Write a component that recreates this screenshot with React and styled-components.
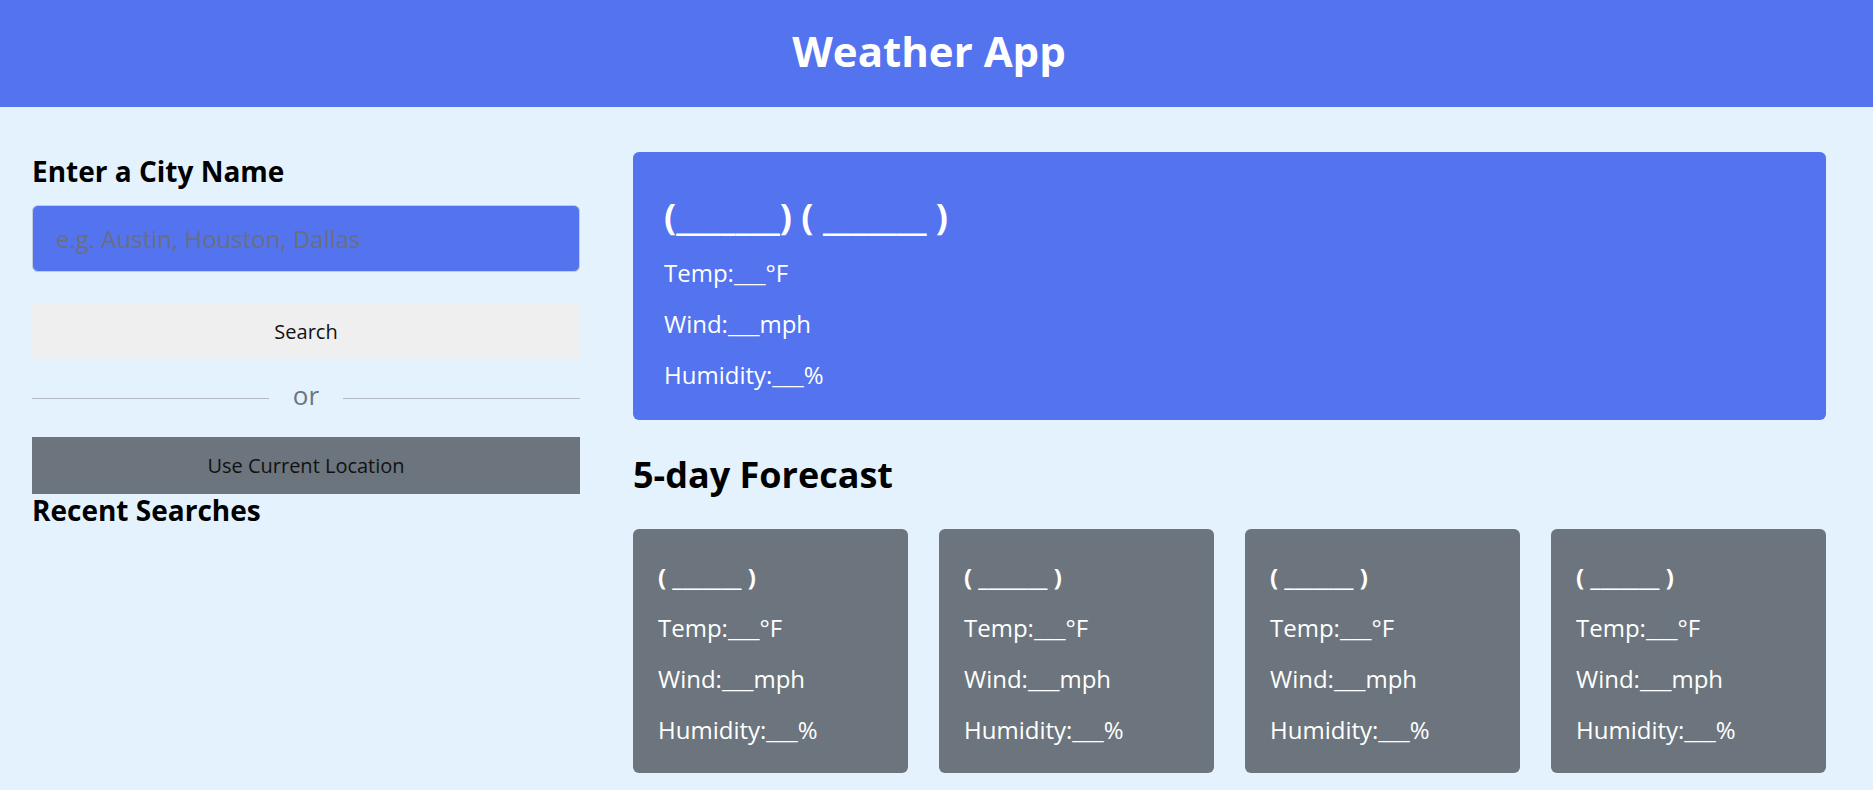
import React from 'react'
import styled, { createGlobalStyle } from 'styled-components'

const GlobalStyle = createGlobalStyle`
  html {
    scrollbar-width: none;
  }
  body {
    margin: 0;
    background: #e3f2fd;
    font-family: "Open Sans", "Noto Sans", sans-serif;
    color: #000;
  }
  * {
    box-sizing: border-box;
  }
`

const forecast = [1, 2, 3, 4, 5]

const App = () => {
  return (
    <div>
      <GlobalStyle />
      <HEADER>
        <TITLE>Weather App</TITLE>
      </HEADER>

      <MAIN>
        <ASIDE>
          <H3>Enter a City Name</H3>
          <INPUT type="text" placeholder="e.g. Austin, Houston, Dallas" />
          <BTN>Search</BTN>
          <ORROW>
            <LINE />
            <OR>or</OR>
            <LINE />
          </ORROW>
          <BTN $dark>Use Current Location</BTN>
          <H3>Recent Searches</H3>
        </ASIDE>

        <SECTION>
          <TODAY>
            <CITY>(_______) ( _______ )</CITY>
            <P>Temp:___°F</P>
            <P>Wind:___mph</P>
            <P>Humidity:___%</P>
          </TODAY>

          <H2>5-day Forecast</H2>
          <CARDS>
            {forecast.map((d) => (
              <CARD key={d}>
                <DAY>( _______ )</DAY>
                <P>Temp:___°F</P>
                <P>Wind:___mph</P>
                <P>Humidity:___%</P>
              </CARD>
            ))}
          </CARDS>
        </SECTION>
      </MAIN>
    </div>
  )
}

export default App

const HEADER = styled.header`
  height: 107px;
  background: #5373ef;
  display: flex;
  align-items: center;
  justify-content: center;
  padding-right: 15px;
`

const TITLE = styled.h1`
  margin: 0 0 4px;
  color: #fff;
  font-size: 42px;
  font-weight: 700;
  line-height: 1.2;
`

const MAIN = styled.main`
  display: flex;
  gap: 53px;
  padding: 0 47px 0 32px;
`

const ASIDE = styled.aside`
  width: 548px;
  flex-shrink: 0;
  padding-top: 48px;
  display: flex;
  flex-direction: column;
`

const H3 = styled.h3`
  margin: 0;
  font-size: 28px;
  font-weight: 700;
  line-height: 1.2;
`

const INPUT = styled.input`
  margin-top: 16px;
  height: 67px;
  width: 100%;
  padding: 0 23px;
  background: #5373ef;
  border: 1px solid #c4cbe0;
  border-radius: 6px;
  font-family: inherit;
  font-size: 24px;
  color: #fff;
  outline: none;

  &::placeholder {
    color: #6a6f80;
  }
`

const BTN = styled.button`
  margin-top: ${(p) => (p.$dark ? '0' : '31px')};
  height: 57px;
  width: 100%;
  border: none;
  border-radius: 0;
  background: ${(p) => (p.$dark ? '#6c757d' : '#efefef')};
  color: #111;
  font-family: inherit;
  font-size: 20px;
  cursor: pointer;
`

const ORROW = styled.div`
  height: 77px;
  display: flex;
  align-items: center;
  gap: 24px;
`

const LINE = styled.div`
  flex: 1;
  height: 1px;
  background: #b4bac2;
`

const OR = styled.span`
  font-size: 26px;
  color: #6c757d;
  line-height: 1;
  padding-bottom: 6px;
`

const SECTION = styled.section`
  flex: 1;
  padding-top: 45px;
  display: flex;
  flex-direction: column;
`

const TODAY = styled.div`
  background: #5373ef;
  border-radius: 6px;
  padding: 28px 31px 12px;
  color: #fff;
`

const CITY = styled.h2`
  margin: 15px 0 17px;
  font-size: 36px;
  font-weight: 700;
  line-height: 1.2;
`

const P = styled.p`
  margin: 0 0 15px;
  font-size: 24px;
  line-height: 1.5;
`

const H2 = styled.h2`
  margin: 33px 0 33px;
  font-size: 36px;
  font-weight: 700;
  line-height: 1.2;
`

const CARDS = styled.div`
  display: grid;
  grid-template-columns: repeat(4, 1fr);
  gap: 31px;
`

const CARD = styled.div`
  height: 244px;
  background: #6c757d;
  border-radius: 6px;
  padding: 23px 25px 8px;
  color: #fff;
`

const DAY = styled.h4`
  margin: 11px 0 18px;
  font-size: 24px;
  font-weight: 700;
  line-height: 1.2;
`
